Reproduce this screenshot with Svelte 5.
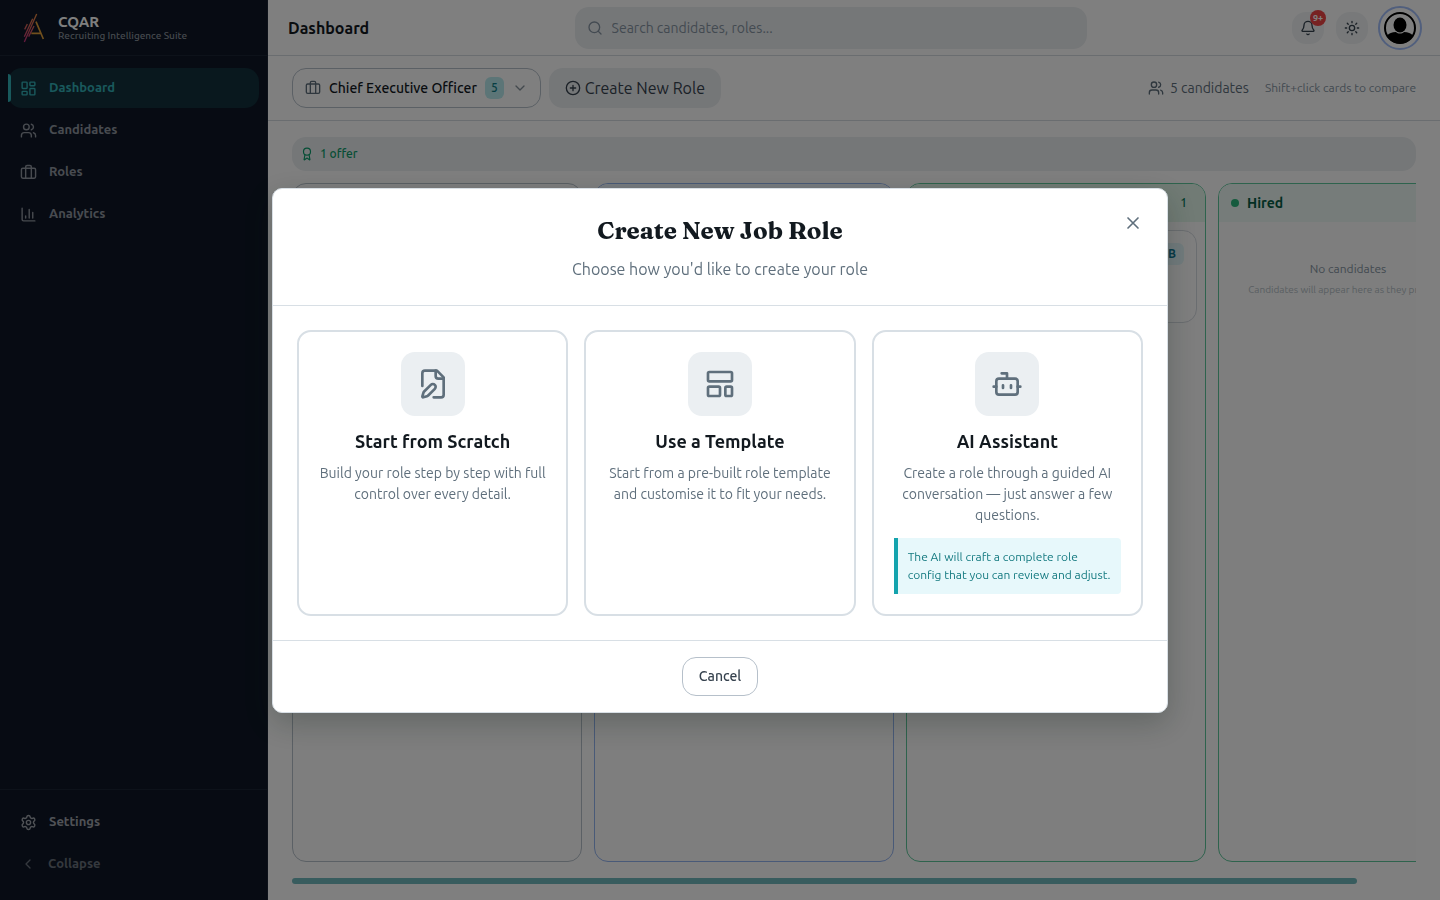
<script lang="ts">
  type Shape = { d?: string; rect?: number[]; circle?: number[] };

  const icons: Record<string, Shape[]> = {
    dashboard: [
      { rect: [3, 3, 7, 9, 1] },
      { rect: [14, 3, 7, 5, 1] },
      { rect: [14, 12, 7, 9, 1] },
      { rect: [3, 16, 7, 5, 1] },
    ],
    users: [
      { d: "M16 21v-2a4 4 0 0 0-4-4H6a4 4 0 0 0-4 4v2" },
      { circle: [9, 7, 4] },
      { d: "M22 21v-2a4 4 0 0 0-3-3.87M16 3.13a4 4 0 0 1 0 7.75" },
    ],
    briefcase: [
      { d: "M16 20V4a2 2 0 0 0-2-2h-4a2 2 0 0 0-2 2v16" },
      { rect: [2, 6, 20, 14, 2] },
    ],
    chart: [{ d: "M3 3v16a2 2 0 0 0 2 2h16M18 17V9M13 17V5M8 17v-3" }],
    settings: [
      { d: "M9.671 4.136a2.34 2.34 0 0 1 4.659 0 2.34 2.34 0 0 0 3.319 1.915 2.34 2.34 0 0 1 2.33 4.033 2.34 2.34 0 0 0 0 3.831 2.34 2.34 0 0 1-2.33 4.033 2.34 2.34 0 0 0-3.319 1.915 2.34 2.34 0 0 1-4.659 0 2.34 2.34 0 0 0-3.32-1.915 2.34 2.34 0 0 1-2.33-4.033 2.34 2.34 0 0 0 0-3.831A2.34 2.34 0 0 1 6.35 6.051a2.34 2.34 0 0 0 3.319-1.915" },
      { circle: [12, 12, 3] },
    ],
    left: [{ d: "m15 18-6-6 6-6" }],
    down: [{ d: "m6 9 6 6 6-6" }],
    search: [{ circle: [11, 11, 8] }, { d: "m21 21-4.3-4.3" }],
    plus: [{ circle: [12, 12, 10] }, { d: "M8 12h8M12 8v8" }],
    bell: [
      { d: "M10.268 21a2 2 0 0 0 3.464 0" },
      { d: "M3.262 15.326A1 1 0 0 0 4 17h16a1 1 0 0 0 .74-1.673C19.41 13.956 18 12.499 18 8A6 6 0 0 0 6 8c0 4.499-1.411 5.956-2.738 7.326" },
    ],
    sun: [
      { circle: [12, 12, 4] },
      { d: "M12 2v2M12 20v2m-7.07-17.07 1.41 1.41m11.32 11.32 1.41 1.41M2 12h2M20 12h2M6.34 17.66l-1.41 1.41M19.07 4.93l-1.41 1.41" },
    ],
    award: [
      { circle: [12, 8, 6] },
      { d: "m15.477 12.89 1.515 8.526a.5.5 0 0 1-.81.47l-3.58-2.687a1 1 0 0 0-1.197 0l-3.586 2.686a.5.5 0 0 1-.81-.469l1.514-8.526" },
    ],
    close: [{ d: "M18 6 6 18M6 6l12 12" }],
    filePen: [
      { d: "M12.5 22H18a2 2 0 0 0 2-2V7l-5-5H6a2 2 0 0 0-2 2v9.5" },
      { d: "M14 2v4a2 2 0 0 0 2 2h4" },
      { d: "M13.378 15.626a1 1 0 1 0-3.004-3.004l-5.01 5.012a2 2 0 0 0-.506.854l-.837 2.87a.5.5 0 0 0 .62.62l2.87-.837a2 2 0 0 0 .854-.506z" },
    ],
    template: [
      { rect: [3, 3, 18, 7, 1] },
      { rect: [3, 14, 9, 7, 1] },
      { rect: [16, 14, 5, 7, 1] },
    ],
    bot: [
      { d: "M12 8V4H8" },
      { rect: [4, 8, 16, 12, 2] },
      { d: "M2 14h2M20 14h2M15 13v2M9 13v2" },
    ],
  };

  const navItems = [
    { label: "Dashboard", icon: "dashboard" },
    { label: "Candidates", icon: "users" },
    { label: "Roles", icon: "briefcase" },
    { label: "Analytics", icon: "chart" },
  ];

  const options = [
    {
      title: "Start from Scratch",
      icon: "filePen",
      text: "Build your role step by step with full control over every detail.",
    },
    {
      title: "Use a Template",
      icon: "template",
      text: "Start from a pre-built role template and customise it to fit your needs.",
    },
    {
      title: "AI Assistant",
      icon: "bot",
      text: "Create a role through a guided AI conversation — just answer a few questions.",
      note: "The AI will craft a complete role config that you can review and adjust.",
    },
  ];

  let active = $state("Dashboard");
  let showModal = $state(true);
  let query = $state("");
</script>

{#snippet icon(name: string, size: number)}
  <svg
    width={size}
    height={size}
    viewBox="0 0 24 24"
    fill="none"
    stroke="currentColor"
    stroke-width="2"
    stroke-linecap="round"
    stroke-linejoin="round"
    aria-hidden="true"
  >
    {#each icons[name] as s}
      {#if s.rect}
        <rect x={s.rect[0]} y={s.rect[1]} width={s.rect[2]} height={s.rect[3]} rx={s.rect[4]} />
      {:else if s.circle}
        <circle cx={s.circle[0]} cy={s.circle[1]} r={s.circle[2]} />
      {:else}
        <path d={s.d} />
      {/if}
    {/each}
  </svg>
{/snippet}

<div class="app">
  <!-- Sidebar -->
  <aside class="sidebar">
    <div class="brand">
      <svg width="24" height="32" viewBox="0 0 72 96" fill="none" aria-hidden="true">
        <defs>
          <linearGradient id="streak" x1="0" y1="0" x2="0" y2="96" gradientUnits="userSpaceOnUse">
            <stop offset="0" stop-color="#e8913c" />
            <stop offset="1" stop-color="#c72c86" />
          </linearGradient>
        </defs>
        <g stroke="url(#streak)" stroke-width="4">
          <path d="M44 6 7 90M32 20 7 74M36 42 20 74M16 36 8 52" />
        </g>
        <path d="M42 29 64 81M28 64h28" stroke="#e3a03a" stroke-width="5" />
      </svg>
      <div>
        <div class="brand-name">CQAR</div>
        <div class="brand-sub">Recruiting Intelligence Suite</div>
      </div>
    </div>

    <nav class="nav">
      {#each navItems as item}
        <a
          href="#{item.label.toLowerCase()}"
          class="nav-item"
          class:active={active === item.label}
          onclick={() => (active = item.label)}
        >
          {@render icon(item.icon, 17)}
          {item.label}
        </a>
      {/each}
    </nav>

    <div class="nav nav-bottom">
      <a href="#settings" class="nav-item settings">
        {@render icon("settings", 17)}
        Settings
      </a>
      <button class="nav-item collapse">
        {@render icon("left", 16)}
        Collapse
      </button>
    </div>
  </aside>

  <main class="main">
    <header class="topbar">
      <h1>Dashboard</h1>
      <div class="search-area">
        <label class="search">
          {@render icon("search", 16)}
          <input
            type="text"
            aria-label="Search"
            placeholder="Search candidates, roles..."
            bind:value={query}
          />
        </label>
      </div>
      <div class="actions">
        <button class="round" aria-label="Notifications">
          {@render icon("bell", 16)}
          <span class="alert">9+</span>
        </button>
        <button class="round" aria-label="Toggle theme">{@render icon("sun", 16)}</button>
        <button class="avatar" aria-label="Profile">
          <svg width="32" height="32" viewBox="0 0 32 32" aria-hidden="true">
            <circle cx="16" cy="16" r="15" fill="#fff" stroke="#000" stroke-width="2" />
            <ellipse cx="16" cy="13" rx="6.5" ry="7.5" />
            <path d="M3 24c2-3 5-4 9-4 2 2 6 2 8 0 4 0 7 1 9 4a15 15 0 0 1-26 0" />
          </svg>
        </button>
      </div>
    </header>

    <div class="toolbar">
      <button class="role-picker">
        {@render icon("briefcase", 16)}
        Chief Executive Officer
        <span class="count">5</span>
        <span class="caret">{@render icon("down", 16)}</span>
      </button>
      <button class="new-role" onclick={() => (showModal = true)}>
        {@render icon("plus", 16)}
        Create New Role
      </button>
      <div class="summary">
        <span class="total">{@render icon("users", 16)} 5 candidates</span>
        <span class="hint">Shift+click cards to compare</span>
      </div>
    </div>

    <div class="content">
      <div class="offers">{@render icon("award", 14)} 1 offer</div>
      <div class="board">
        <section class="column first"></section>
        <section class="column blue"><div class="column-head"></div></section>
        <section class="column green">
          <div class="column-head">
            <span class="column-count">1</span>
          </div>
          <div class="candidate"><span class="grade">B</span></div>
        </section>
        <section class="column green hired">
          <div class="column-head"><i class="dot"></i>Hired</div>
          <div class="empty">
            <div>No candidates</div>
            <small>Candidates will appear here as they progress</small>
          </div>
        </section>
      </div>
      <div class="scroll-thumb"></div>
    </div>
  </main>
</div>

{#if showModal}
  <div class="overlay">
    <div class="modal" role="dialog" aria-modal="true" aria-labelledby="modal-title">
      <button class="close" aria-label="Close" onclick={() => (showModal = false)}>
        {@render icon("close", 20)}
      </button>
      <div class="modal-head">
        <h2 id="modal-title">Create New Job Role</h2>
        <p>Choose how you'd like to create your role</p>
      </div>
      <div class="options">
        {#each options as option}
          <button class="option">
            <span class="option-icon">{@render icon(option.icon, 32)}</span>
            <span class="option-title">{option.title}</span>
            <span class="option-text">{option.text}</span>
            {#if option.note}
              <span class="note">{option.note}</span>
            {/if}
          </button>
        {/each}
      </div>
      <div class="modal-foot">
        <button class="cancel" onclick={() => (showModal = false)}>Cancel</button>
      </div>
    </div>
  </div>
{/if}

<style>
  :global(body) {
    margin: 0;
    font-family: Ubuntu, Roboto, sans-serif;
    line-height: 1.5;
    background: #fff;
    color: #12191f;
  }

  button,
  input {
    font-family: inherit;
    line-height: inherit;
    border: none;
    background: none;
    padding: 0;
    color: inherit;
  }

  button {
    cursor: pointer;
  }

  svg {
    flex-shrink: 0;
  }

  .app {
    display: flex;
    min-height: 100vh;
  }

  /* Sidebar */
  .sidebar {
    display: flex;
    flex-direction: column;
    flex: 0 0 268px;
    box-sizing: border-box;
    background: #0e1726;
    border-right: 1px solid #1a2434;
  }

  .brand {
    display: flex;
    align-items: center;
    gap: 12px;
    height: 55px;
    padding-left: 22px;
    border-bottom: 1px solid #1a2434;
  }

  .brand-name {
    font-size: 15px;
    line-height: 16px;
    font-weight: 600;
    color: #fff;
  }

  .brand-sub {
    font-size: 10px;
    line-height: 12px;
    font-weight: 500;
    color: #8b929c;
  }

  .nav {
    display: flex;
    flex-direction: column;
    gap: 2px;
    padding: 12px 8px;
  }

  .nav-bottom {
    margin-top: auto;
    padding-bottom: 16px;
    border-top: 1px solid #1a2434;
  }

  .nav-item {
    position: relative;
    display: flex;
    align-items: center;
    gap: 12px;
    height: 40px;
    padding: 0 12px;
    border-radius: 14px;
    font-size: 13px;
    font-weight: 600;
    color: #9096a0;
    text-decoration: none;
  }

  .nav-item.active {
    background: #12303c;
    color: #33b2b9;
  }

  .nav-item.active::before {
    content: "";
    position: absolute;
    left: 0;
    top: 6px;
    bottom: 6px;
    width: 3px;
    border-radius: 0 3px 3px 0;
    background: #33b2b9;
  }

  .settings {
    color: #a0a5ad;
  }

  .collapse {
    color: #6b727d;
  }

  /* Top bar */
  .main {
    display: flex;
    flex-direction: column;
    flex: 1;
    min-width: 0;
  }

  .topbar {
    display: flex;
    align-items: center;
    height: 55px;
    padding: 0 20px;
    border-bottom: 1px solid #d5dae0;
  }

  h1 {
    margin: 0;
    font-size: 16px;
    font-weight: 700;
  }

  .search-area {
    display: flex;
    justify-content: center;
    flex: 1;
  }

  .search {
    display: flex;
    align-items: center;
    gap: 9px;
    flex: 0 1 512px;
    box-sizing: border-box;
    height: 42px;
    padding: 0 12px;
    border-radius: 14px;
    background: #ebeef1;
    color: #8695a3;
  }

  .search input {
    flex: 1;
    min-width: 0;
    font-size: 14px;
    line-height: normal;
    outline: none;
  }

  .search input::placeholder {
    color: #8695a3;
  }

  .actions {
    display: flex;
    align-items: center;
    gap: 12px;
  }

  .round {
    position: relative;
    display: grid;
    place-items: center;
    width: 32px;
    height: 32px;
    border-radius: 14px;
    background: #f0f3f5;
    color: #36424e;
  }

  .alert {
    position: absolute;
    top: -2px;
    right: -2px;
    width: 16px;
    border-radius: 8px;
    background: #ef4444;
    color: #fff;
    font-size: 9px;
    line-height: 16px;
    font-weight: 600;
  }

  .avatar {
    display: grid;
    margin: 0 4px;
    border-radius: 50%;
    outline: 2px solid #a3bffa;
    outline-offset: 4px;
  }

  /* Toolbar */
  .toolbar {
    display: flex;
    align-items: center;
    gap: 8px;
    padding: 12px 24px;
    border-bottom: 1px solid #d5dae0;
  }

  .role-picker,
  .new-role {
    display: flex;
    align-items: center;
    height: 40px;
    border-radius: 14px;
  }

  .role-picker {
    gap: 8px;
    padding: 0 12px;
    border: 1px solid #b6c0ca;
    font-size: 14px;
    font-weight: 500;
  }

  .role-picker svg {
    color: #5f6f7c;
  }

  .role-picker .caret {
    display: grid;
    opacity: 0.75;
  }

  .count {
    padding: 0 6px;
    border-radius: 6px;
    background: #b8eaee;
    color: #0f7d86;
    font-size: 12px;
    line-height: 22px;
    font-weight: 500;
  }

  .new-role {
    gap: 4px;
    padding: 0 16px;
    background: #ebeef1;
    color: #36424e;
    font-size: 16px;
  }

  .summary {
    display: flex;
    align-items: center;
    gap: 16px;
    margin-left: auto;
  }

  .total {
    display: flex;
    align-items: center;
    gap: 6px;
    font-size: 14px;
    color: #5f6f7c;
  }

  .hint {
    font-size: 12px;
    color: #8695a3;
  }

  /* Board */
  .content {
    display: flex;
    flex-direction: column;
    flex: 1;
    padding: 16px 24px;
  }

  .offers {
    display: flex;
    align-items: center;
    gap: 6px;
    height: 34px;
    padding: 0 8px;
    border-radius: 14px;
    background: #ebeef1;
    color: #0a9c6b;
    font-size: 12px;
    font-weight: 500;
  }

  .board {
    display: flex;
    flex: 1;
    gap: 12px;
    margin: 12px 0 16px;
    overflow: hidden;
  }

  .column {
    flex: 0 0 300px;
    box-sizing: border-box;
    border: 1px solid #b6c0ca;
    border-radius: 14px;
    overflow: hidden;
    background: #fcfcfc;
  }

  .column.first {
    flex-basis: 290px;
  }

  .column.blue {
    border-color: #93b4f0;
  }

  .column.green {
    border-color: #5dc79b;
  }

  .column.hired {
    flex-basis: 260px;
  }

  .column-head {
    display: flex;
    align-items: center;
    gap: 8px;
    height: 38px;
    padding: 0 12px;
    font-size: 14px;
    font-weight: 600;
  }

  .blue .column-head {
    background: #eff6ff;
  }

  .green .column-head {
    background: #e2f7ea;
    color: #065f46;
  }

  .hired .column-head {
    background: #edf9f5;
  }

  .column-count {
    margin-left: auto;
    padding: 0 6px;
    font-size: 12px;
    font-weight: 500;
    color: #047857;
  }

  .dot {
    width: 8px;
    height: 8px;
    border-radius: 50%;
    background: #2cb67d;
  }

  .candidate {
    display: flex;
    justify-content: flex-end;
    align-items: flex-start;
    box-sizing: border-box;
    height: 93px;
    margin: 8px;
    padding: 12px;
    border: 1px solid #d5dae0;
    border-radius: 14px;
    background: #fff;
  }

  .grade {
    padding: 0 8px;
    border-radius: 6px;
    background: #e4f6fa;
    color: #0e7490;
    font-size: 12px;
    line-height: 22px;
    font-weight: 700;
  }

  .empty {
    padding-top: 36px;
    text-align: center;
    font-size: 12px;
    line-height: 22px;
    color: #8695a3;
    white-space: nowrap;
  }

  .empty small {
    display: block;
    font-size: 10px;
    line-height: 20px;
    color: #b3bcc5;
  }

  .scroll-thumb {
    width: 1065px;
    max-width: 95%;
    height: 6px;
    border-radius: 3px;
    background: #71b9bd;
  }

  /* Modal */
  .overlay {
    position: fixed;
    inset: 0;
    display: flex;
    align-items: center;
    justify-content: center;
    background: rgba(0, 0, 0, 0.5);
  }

  .modal {
    position: relative;
    box-sizing: border-box;
    width: 100%;
    max-width: 896px;
    border: 1px solid #d8dfe5;
    border-radius: 10px;
    background: #fff;
    box-shadow: 0 10px 30px rgba(15, 30, 25, 0.25);
  }

  .close {
    position: absolute;
    top: 16px;
    right: 16px;
    display: grid;
    place-items: center;
    width: 36px;
    height: 36px;
    color: #5f6f7c;
  }

  .modal-head {
    padding: 24px;
    border-bottom: 1px solid #d8dfe5;
    text-align: center;
  }

  h2 {
    margin: 0 0 8px;
    font-family: Fraunces, "Liberation Serif", serif;
    font-size: 24px;
    line-height: 36px;
    font-weight: 700;
  }

  .modal-head p {
    margin: 0;
    font-size: 16px;
    line-height: 24px;
    color: #5f6f7c;
  }

  .options {
    display: grid;
    grid-template-columns: repeat(3, 1fr);
    gap: 16px;
    padding: 24px;
  }

  .option {
    display: flex;
    flex-direction: column;
    align-items: center;
    padding: 20px;
    border: 2px solid #d8dfe5;
    border-radius: 14px;
  }

  .option-icon {
    display: grid;
    place-items: center;
    width: 64px;
    height: 64px;
    margin-bottom: 12px;
    border-radius: 14px;
    background: #ebeff2;
    color: #5f6f7c;
  }

  .option-title {
    margin-bottom: 8px;
    font-size: 18px;
    line-height: 27px;
    font-weight: 600;
    color: #12191f;
  }

  .option-text {
    font-size: 14px;
    line-height: 21px;
    color: #5f6f7c;
  }

  .note {
    align-self: stretch;
    margin-top: 12px;
    padding: 10px;
    border-left: 4px solid #14a3ad;
    border-radius: 0 4px 4px 0;
    background: #e7f8fb;
    color: #147a80;
    font-size: 12px;
    line-height: 18px;
    text-align: left;
  }

  .modal-foot {
    display: flex;
    justify-content: center;
    padding: 16px;
    border-top: 1px solid #d8dfe5;
  }

  .cancel {
    padding: 8px 16px;
    border: 1px solid #b6c0ca;
    border-radius: 14px;
    font-size: 14px;
    line-height: 21px;
    font-weight: 500;
    color: #36424e;
  }
</style>
